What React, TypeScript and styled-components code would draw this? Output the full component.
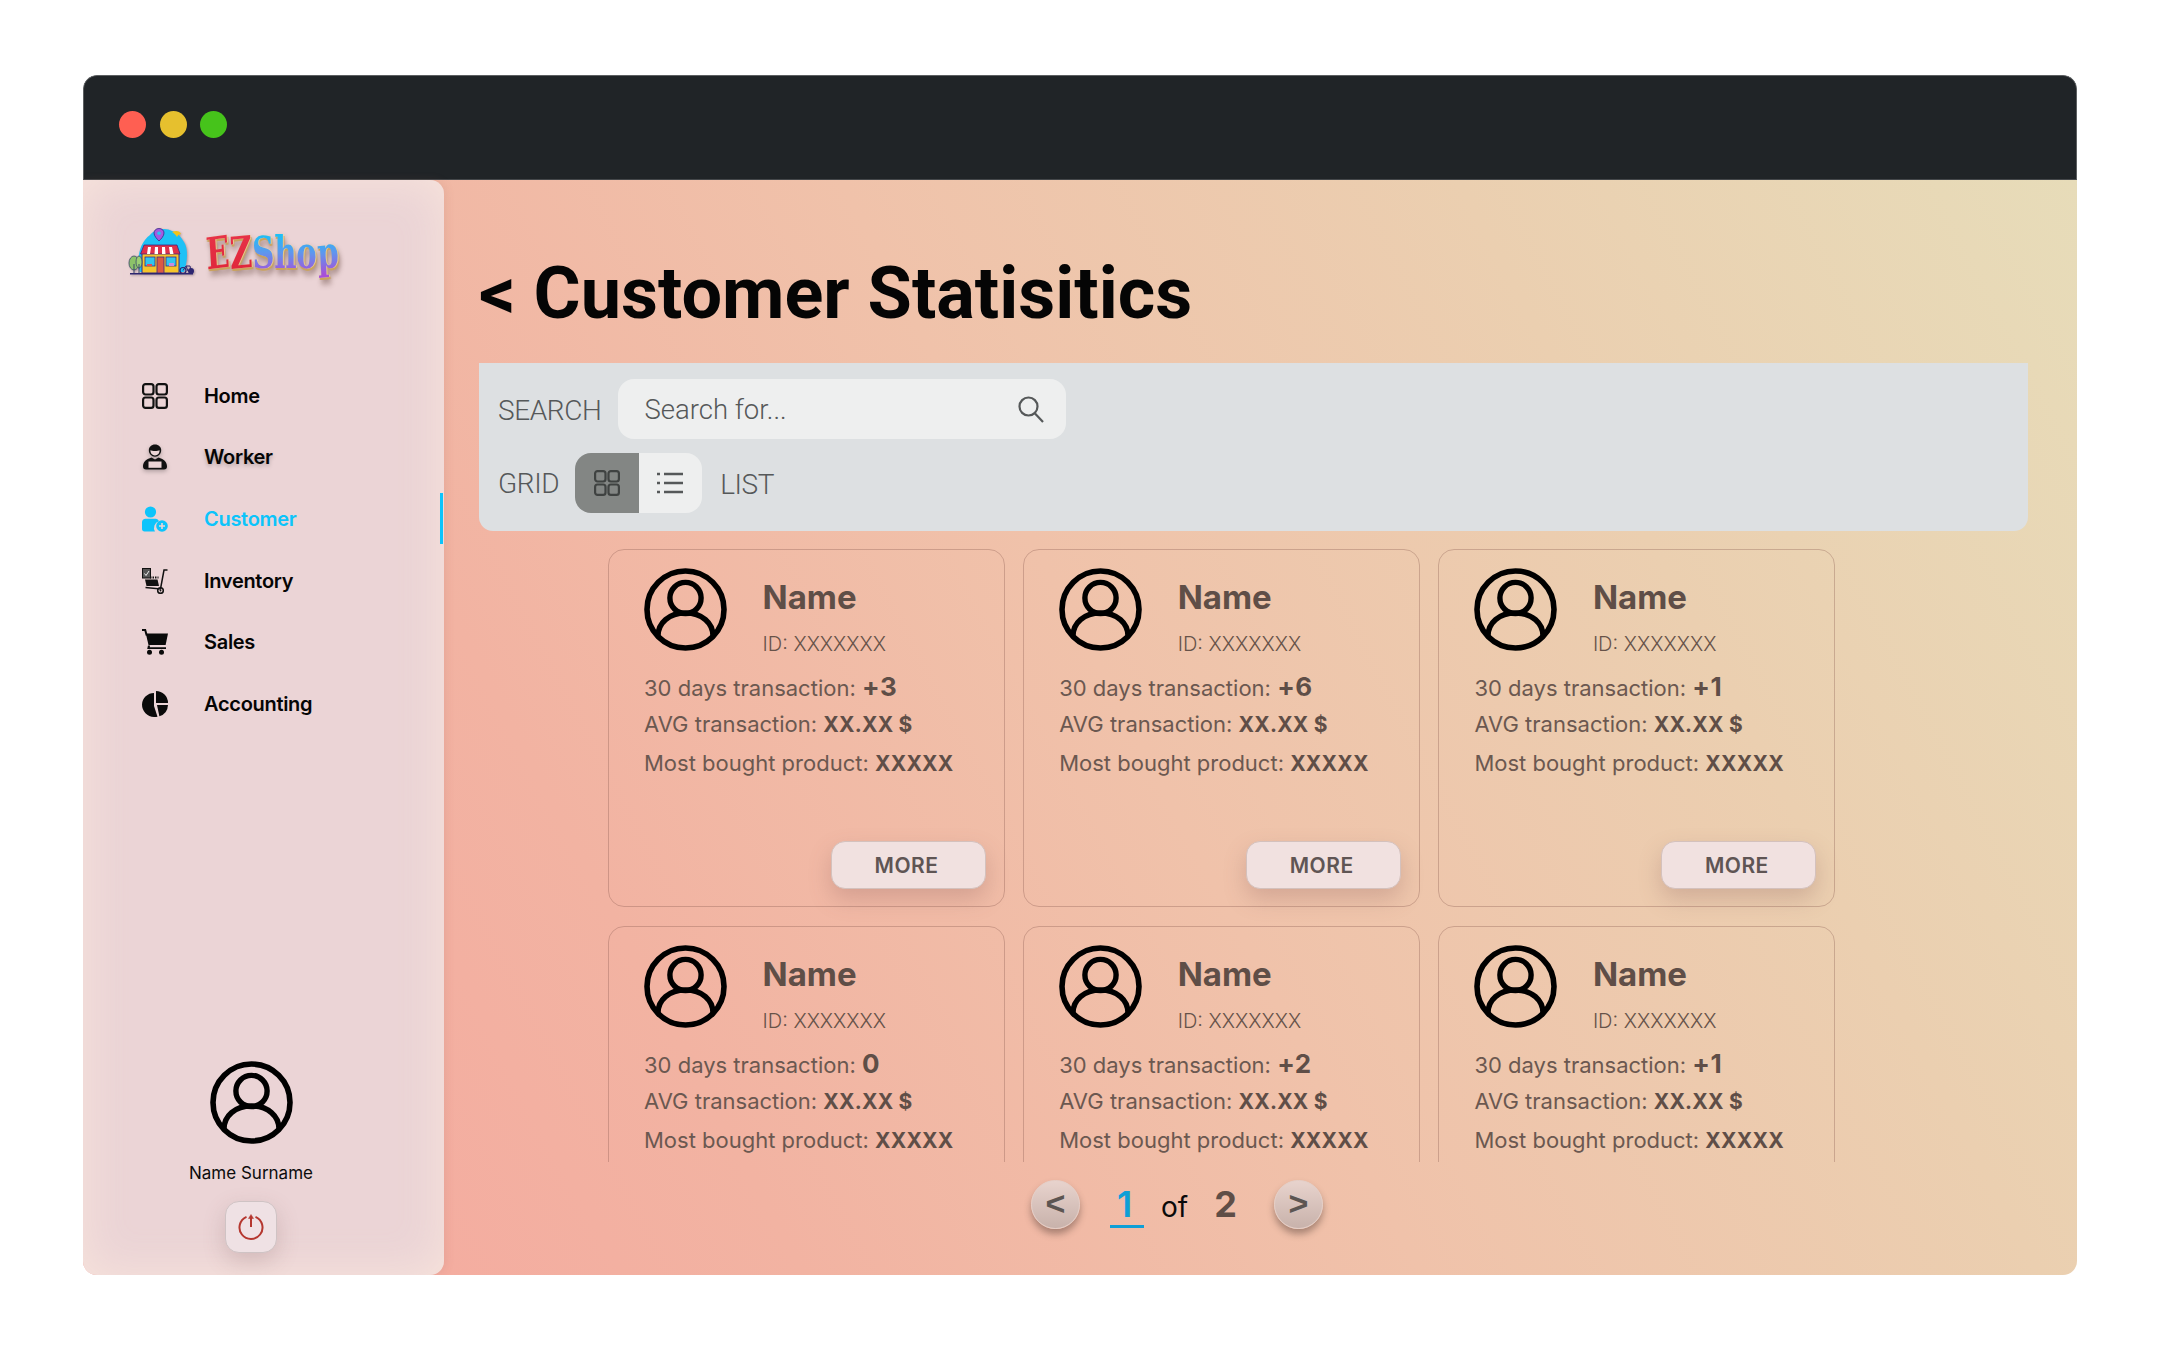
import styled, { createGlobalStyle } from "styled-components";

const GlobalStyle = createGlobalStyle`
    html, body {
        margin: 0;
        padding: 0;
        background: #fff;
        font-family: Inter, "Liberation Sans", sans-serif;
    }
    * { box-sizing: border-box; }
`

const Page = styled.div`
    width: 2161px;
    height: 1350px;
    padding: 75px 84px 75px 83px;
    overflow: hidden;
`

const AppWindow = styled.div`
    width: 100%;
    height: 100%;
    display: flex;
    flex-direction: column;
    border-radius: 14px;
    overflow: hidden;
`

const TitleBar = styled.div`
    height: 105px;
    flex: none;
    display: flex;
    align-items: center;
    gap: 13.5px;
    padding: 0 0 7px 35px;
    background: #202427;
    border: 1px solid #5c5f61;
    border-bottom-color: #44474a;
    border-radius: 14px 14px 0 0;
`

const Dot = styled.span<{ $color: string }>`
    width: 27px;
    height: 27px;
    border-radius: 50%;
    background: ${props => props.$color};
`

const Body = styled.div`
    flex: 1;
    min-height: 0;
    display: flex;
    background: linear-gradient(62deg, #f6a79e 0%, #f2b3a2 28%, #f0c2aa 52%, #ebcfb0 76%, #e7dcb9 100%);
`

const Sidebar = styled.aside`
    width: 361px;
    flex: none;
    display: flex;
    flex-direction: column;
    padding-top: 45px;
    background: #ebd4d6;
    border-radius: 0 14px 14px 0;
    box-shadow: inset 0 0 46px rgba(255, 236, 222, 0.65), 2px 0 10px rgba(150, 90, 80, 0.12);
`

const Logo = styled.div`
    height: 55px;
    display: flex;
    align-items: center;
    gap: 11px;
    padding-left: 45px;
`

const LogoWord = styled.div`
    display: flex;
    font-family: "DejaVu Serif", serif;
    font-weight: 700;
    font-size: 44px;
    line-height: 50px;
    transform: scaleX(0.7);
    transform-origin: left center;
    filter: drop-shadow(1px 0 0 #f0d9a4) drop-shadow(1px 2px 0 #c9a25e) drop-shadow(2px 4px 3px rgba(90, 60, 50, 0.45));
`

const LogoLetter = styled.span<{ $tilt: number; $fill: string }>`
    display: inline-block;
    transform: rotate(${props => props.$tilt}deg);
    background: ${props => props.$fill};
    -webkit-background-clip: text;
    background-clip: text;
    color: transparent;
`

const Nav = styled.nav`
    margin-top: 85px;
    display: flex;
    flex-direction: column;
`

const NavRow = styled.div<{ $active?: boolean; $shadow?: boolean }>`
    position: relative;
    height: 61.6px;
    display: flex;
    align-items: center;
    gap: 36px;
    padding-left: 59px;
    font-size: 20px;
    font-weight: 600;
    letter-spacing: -0.3px;
    color: ${props => props.$active ? "#0cc4fb" : "#050505"};
    text-shadow: ${props => props.$shadow ? "0 2px 4px rgba(0, 0, 0, 0.25)" : "none"};
`

const NavMarker = styled.span`
    position: absolute;
    right: 1.5px;
    top: 5px;
    width: 3px;
    height: 51px;
    background: #0cc4fb;
`

const NavIcon = styled.svg`
    width: 26px;
    height: 26px;
    flex: none;
    display: block;
`

const UserBlock = styled.div`
    margin-top: auto;
    width: 336px;
    padding-bottom: 22px;
    display: flex;
    flex-direction: column;
    align-items: center;
`

const UserName = styled.div`
    margin-top: 17px;
    font-size: 17px;
    line-height: 24px;
    color: #0c0c0c;
`

const PowerButton = styled.div`
    margin-top: 16px;
    width: 52px;
    height: 52px;
    display: flex;
    align-items: center;
    justify-content: center;
    background: #efe1e4;
    border: 1.5px solid #cfc3c4;
    border-radius: 14px;
    box-shadow: 0 8px 22px rgba(120, 80, 80, 0.22);
`

const Main = styled.main`
    flex: 1;
    min-width: 0;
    display: flex;
    flex-direction: column;
    padding: 0 49px 0 35px;
`

const Title = styled.h1`
    margin: 0;
    height: 183px;
    padding-top: 61px;
    font-family: Roboto, "Liberation Sans", sans-serif;
    font-size: 72px;
    line-height: 106px;
    font-weight: 700;
    letter-spacing: 0;
    color: #050505;
`

const Toolbar = styled.section`
    height: 168px;
    flex: none;
    display: flex;
    flex-direction: column;
    gap: 14px;
    padding: 16px 0 0 19px;
    background: #dde0e2;
    border-radius: 0 0 14px 14px;
    font-family: Roboto, "Liberation Sans", sans-serif;
    color: #555859;
`

const ToolRow = styled.div`
    height: 60px;
    display: flex;
    align-items: center;
`

const ToolLabel = styled.span<{ $gap: number; $drop: number }>`
    font-size: 28px;
    font-weight: 300;
    letter-spacing: -0.4px;
    margin-right: ${props => props.$gap}px;
    padding-top: ${props => props.$drop}px;
`

const SearchBox = styled.div`
    width: 448px;
    height: 60px;
    display: flex;
    align-items: center;
    justify-content: space-between;
    padding: 0 22px 0 26px;
    background: #eeefef;
    border-radius: 16px;
    font-size: 27.5px;
    font-weight: 300;
    letter-spacing: 0;
`

const Toggle = styled.div`
    width: 127px;
    height: 60px;
    display: flex;
    border-radius: 16px;
    overflow: hidden;
    margin-right: 18px;
`

const ToggleCell = styled.div<{ $on?: boolean }>`
    flex: 1;
    display: flex;
    align-items: center;
    justify-content: center;
    background: ${props => props.$on ? "#838684" : "#eeefef"};
`

const CardViewport = styled.div`
    margin-top: 18px;
    height: 613px;
    flex: none;
    overflow: hidden;
    padding-left: 129px;
`

const CardGrid = styled.div`
    display: grid;
    grid-template-columns: repeat(3, 397px);
    grid-auto-rows: 358px;
    column-gap: 18.2px;
    row-gap: 19px;
`

const Card = styled.article`
    position: relative;
    padding: 18px 0 0 35px;
    border: 1.5px solid rgba(130, 85, 75, 0.32);
    border-radius: 16px;
    color: #6b5850;
`

const CardHead = styled.div`
    display: flex;
    gap: 35.5px;
    height: 102px;
`

const NameColumn = styled.div`
    display: flex;
    flex-direction: column;
`

const CardName = styled.div`
    font-size: 33px;
    font-weight: 700;
    line-height: 40px;
    margin-top: 9px;
    color: #5f4e47;
`

const CardId = styled.div`
    font-size: 20px;
    font-weight: 300;
    line-height: 26px;
    margin-top: 14px;
    color: #665249;
`

const StatLine = styled.div<{ $top: number }>`
    margin-top: ${props => props.$top}px;
    font-size: 22px;
    line-height: 28px;
    font-weight: 400;
    letter-spacing: 0;
`

const StatValue = styled.b<{ $large?: boolean }>`
    font-weight: 700;
    font-size: ${props => props.$large ? "26px" : "21px"};
    letter-spacing: ${props => props.$large ? "0.5px" : "0.2px"};
    color: #5f4e47;
`

const MoreButton = styled.div`
    position: absolute;
    right: 18px;
    top: 291px;
    width: 155px;
    height: 48px;
    display: flex;
    align-items: center;
    justify-content: center;
    padding-right: 4px;
    background: #f1e1e0;
    border: 1.5px solid #d4c1bd;
    border-radius: 14px;
    box-shadow: 0 10px 22px rgba(130, 85, 85, 0.26);
    font-size: 21px;
    font-weight: 600;
    color: #5f5554;
    letter-spacing: 0.5px;
`

const Pagination = styled.div`
    flex: 1;
    display: flex;
    align-items: flex-start;
    padding: 18px 0 0 552px;
`

const PageArrow = styled.div<{ $gap: number }>`
    width: 49px;
    height: 49px;
    margin-right: ${props => props.$gap}px;
    display: flex;
    align-items: center;
    justify-content: center;
    border-radius: 50%;
    background: linear-gradient(180deg, #e8d3cd, #c8b2ab);
    border: 1px solid #e3d0ca;
    box-shadow: 0 5px 7px rgba(70, 50, 45, 0.42);
    font-family: "Liberation Sans", sans-serif;
    font-size: 34px;
    font-weight: 700;
    color: #5c5552;
    padding-bottom: 3px;
`

const PageCurrent = styled.div`
    width: 34px;
    height: 48px;
    display: flex;
    justify-content: center;
    padding: 1px 5px 0 0;
    border-bottom: 3px solid #0e9fd6;
    font-size: 36px;
    font-weight: 600;
    line-height: 46px;
    color: #0e9fd6;
`

const PageOf = styled.div`
    margin-left: 17px;
    font-size: 28px;
    line-height: 54px;
    color: #0a0a0a;
`

const PageTotal = styled.div`
    margin: 0 37px 0 26px;
    font-size: 36px;
    font-weight: 700;
    line-height: 46px;
    padding-top: 1px;
    color: #5f4e47;
`

function Avatar({ size = 83 }: { size?: number }) {
    return (
        <svg width={size} height={size} viewBox="0 0 83 83" fill="none" stroke="#000" style={{ flex: "none", display: "block" }}>
            <circle cx="41.5" cy="41.5" r="38.5" strokeWidth="5.6" />
            <circle cx="41.5" cy="30" r="15.6" strokeWidth="5.4" />
            <path d="M14 68 C14 55 25 45 41.5 45 C58 45 69 55 69 68" strokeWidth="5.4" />
        </svg>
    )
}

function GridGlyph({ color, size }: { color: string; size: number }) {
    return (
        <svg width={size} height={size} viewBox="0 0 26 26" fill="none" stroke={color} strokeWidth="2.2">
            <rect x="1.1" y="1.1" width="10.4" height="10.4" rx="2.4" />
            <rect x="14.5" y="1.1" width="10.4" height="10.4" rx="2.4" />
            <rect x="1.1" y="14.5" width="10.4" height="10.4" rx="2.4" />
            <rect x="14.5" y="14.5" width="10.4" height="10.4" rx="2.4" />
        </svg>
    )
}

const HomeIcon = () => <GridGlyph color="#111" size={26} />

const WorkerIcon = () => (
    <NavIcon viewBox="0 0 26 26" style={{ filter: "drop-shadow(0 2px 2px rgba(0,0,0,.25))" }}>
        <path d="M13 0.5c3.6 0 6.2 2.5 6.2 5.6 0 3.8-2.7 6.7-6.2 6.7S6.8 9.9 6.8 6.1C6.8 3 9.4.5 13 .5z" fill="#111" />
        <path d="M8.4 6.3c1.6.9 7.6.9 9.200 0 .1 3-1.900 5.200-4.600 5.200s-4.700-2.200-4.600-5.200z" fill="#ecd5d6" />
        <path d="M7 14.500 9.500 13.500 13 15.500 16.500 13.500 19 14.500C22.500 15.800 25 18.500 25 22.500 25 24.500 24 25.500 22 25.500H4C2 25.500 1 24.500 1 22.500 1 18.500 3.500 15.800 7 14.500z" fill="#111" />
        <path d="M6.500 17.500H19.500V23.800H6.500z" fill="#ecd5d6" />
    </NavIcon>
)

const CustomerIcon = () => (
    <NavIcon viewBox="0 0 26 26" fill="#0cc4fb">
        <circle cx="8.500" cy="6" r="5.600" />
        <path d="M3.500 12.800h10c1.800 0 3 1 3.400 2.400a7 7 0 0 0-3.900 10.300H2.500C1 25.500 0 24.500 0 23v-6.700c0-2 1.500-3.500 3.500-3.500z" />
        <circle cx="20" cy="20" r="5.800" />
        <path d="M20 17v6M17 20h6" stroke="#ecd5d6" strokeWidth="1.600" />
    </NavIcon>
)

const InventoryIcon = () => (
    <NavIcon viewBox="0 0 26 26">
        <rect x="0.500" y="0.500" width="8" height="9.500" fill="#555" stroke="#111" />
        <path d="M2.500 5.500 4 7.500 7 3" fill="none" stroke="#eee" strokeWidth="1" />
        <path d="M3 11.500H15.500L17 18H4.500z" fill="#111" />
        <path d="M8 9.500h8.500" stroke="#111" strokeWidth="1.800" strokeDasharray="1.500 1" />
        <path d="M25.500 2H22L18.500 21 3.500 19.500" fill="none" stroke="#111" strokeWidth="1.500" />
        <circle cx="18.500" cy="22.500" r="2.800" fill="none" stroke="#111" strokeWidth="1.500" />
        <circle cx="18.500" cy="22.500" r="0.900" fill="#111" />
    </NavIcon>
)

const SalesIcon = () => (
    <NavIcon viewBox="0 0 26 26">
        <path d="M0 1h3.200l1.500 5.500" fill="none" stroke="#0a0a0a" strokeWidth="2" />
        <path d="M3.800 4.600H26L23.600 16H6.500z" fill="#0a0a0a" />
        <path d="M6 16.500 5.200 20H24v-1.800H7.800L8 16.500z" fill="#0a0a0a" />
        <circle cx="7.500" cy="23.200" r="2.500" fill="#0a0a0a" />
        <circle cx="19.500" cy="23.200" r="2.500" fill="#0a0a0a" />
    </NavIcon>
)

const AccountingIcon = () => (
    <NavIcon viewBox="0 0 26 26" fill="#0a0a0a">
        <path d="M14 0a12 12 0 0 1 12 12H14z" />
        <path d="M12 2v13l3.500 10.800A13 13 0 0 1 12 26 12.500 12.500 0 0 1 0 13.500 12 12 0 0 1 12 2z" />
        <path d="M15 14h11a12.500 12.500 0 0 1-8.600 11.300z" />
    </NavIcon>
)

const StoreLogo = () => (
    <svg width="67" height="50" viewBox="0 0 67 50" style={{ flex: "none", filter: "drop-shadow(1px 1px 1px rgba(80,60,70,.4))" }}>
        <path d="M22 7C26 1 38-1 44 3 50 5 53 9 56 14 60 20 60 32 56 44H12C8 30 12 14 22 7z" fill="#1dc1f6" />
        <path d="M44 4c4-2 8-1 9 2-2 0-3 1-4 3-1-2-3-4-5-5z" fill="#f3c319" />
        <path d="M31 0.500c3 0 5 2 5 4.500 0 3-3 6-5 8-2-2-5-5-5-8 0-2.500 2-4.500 5-4.500z" fill="#a45be0" stroke="#3a2a86" strokeWidth="0.800" />
        <circle cx="31" cy="5.200" r="1.800" fill="#27c4f3" />
        <rect x="14" y="24" width="37" height="21" fill="#f5c52b" stroke="#3a2a86" strokeWidth="1" />
        <path d="M16 17H49L52 26H12.500z" fill="#df3049" stroke="#3a2a86" strokeWidth="0.800" />
        <path d="M20 19h3l-1 7h-3zM27 19h3v7h-3.500zM34 19h3l.5 7H34zM41 19h3l1.500 7H42z" fill="#fff" />
        <rect x="17" y="29" width="10" height="9" fill="#30c6ee" stroke="#3a2a86" strokeWidth="0.800" />
        <rect x="38" y="29" width="10" height="9" fill="#30c6ee" stroke="#3a2a86" strokeWidth="0.800" />
        <rect x="29" y="29" width="7" height="16" fill="#dc5a43" stroke="#3a2a86" strokeWidth="0.800" />
        <path d="M19 36h5v2h-5z" fill="#e34b5e" />
        <path d="M41 35h5v3h-5z" fill="#c98be0" />
        <ellipse cx="6" cy="35" rx="5" ry="7" fill="#8cc269" stroke="#3a4a6a" strokeWidth="0.800" />
        <ellipse cx="11" cy="34" rx="3" ry="6" fill="#9ccf74" stroke="#3a4a6a" strokeWidth="0.800" />
        <path d="M6 36v9M11 36v9" stroke="#3a4a6a" strokeWidth="1" />
        <circle cx="55" cy="42.500" r="3" fill="none" stroke="#2d2570" strokeWidth="1.200" />
        <circle cx="63" cy="43" r="3" fill="#2d2570" />
        <path d="M55 42.500 58 38H62L63 43M58 38l2 5" fill="none" stroke="#2d2570" strokeWidth="1" />
        <rect x="2" y="45" width="63" height="1.500" fill="#2d2570" />
    </svg>
)

const SearchIcon = () => (
    <svg width="26" height="27" viewBox="0 0 26 27" fill="none" stroke="#555859" strokeWidth="2.200">
        <circle cx="10.500" cy="10.500" r="9" />
        <path d="M17 17.500 25 26" />
    </svg>
)

const ListIcon = () => (
    <svg width="26" height="22" viewBox="0 0 26 22" stroke="#555859" strokeWidth="2.400">
        <path d="M0 2h3M0 11h3M0 20h3" />
        <path d="M7 2h19M7 11h19M7 20h19" />
    </svg>
)

const PowerIcon = () => (
    <svg width="26" height="26" viewBox="0 0 26 26" fill="none" stroke="#b5372f" strokeWidth="2">
        <path d="M8.500 2.900A11.500 11.500 0 1 0 17.500 2.900" />
        <path d="M13 13V3" />
        <path d="M10.500 4.500 13 .5 15.500 4.500z" fill="#b5372f" strokeWidth="0.500" />
    </svg>
)

const RED = "linear-gradient(180deg, #e8344a, #de2438)"
const BLUE = "linear-gradient(180deg, #12c6f8 8%, #5f96ee 50%, #a84fd8 92%)"

const logoLetters = [
    { char: "E", tilt: -5, fill: RED },
    { char: "Z", tilt: -4, fill: RED },
    { char: "S", tilt: -3, fill: BLUE },
    { char: "h", tilt: 0, fill: BLUE },
    { char: "o", tilt: 2, fill: BLUE },
    { char: "p", tilt: -4, fill: BLUE },
]

const navItems = [
    { label: "Home", icon: <HomeIcon /> },
    { label: "Worker", icon: <WorkerIcon />, shadow: true },
    { label: "Customer", icon: <CustomerIcon />, active: true },
    { label: "Inventory", icon: <InventoryIcon /> },
    { label: "Sales", icon: <SalesIcon /> },
    { label: "Accounting", icon: <AccountingIcon /> },
]

const customers = ["+3", "+6", "+1", "0", "+2", "+1"]

export default function App() {
    return (
        <Page>
            <GlobalStyle />
            <AppWindow>
                <TitleBar>
                    <Dot $color="#ff5f52" />
                    <Dot $color="#e6c02e" />
                    <Dot $color="#46c31b" />
                </TitleBar>
                <Body>
                    <Sidebar>
                        <Logo>
                            <StoreLogo />
                            <LogoWord>
                                {logoLetters.map(l => (
                                    <LogoLetter key={l.char} $tilt={l.tilt} $fill={l.fill}>{l.char}</LogoLetter>
                                ))}
                            </LogoWord>
                        </Logo>
                        <Nav>
                            {navItems.map(item => (
                                <NavRow key={item.label} $active={item.active} $shadow={item.shadow}>
                                    {item.icon}
                                    {item.label}
                                    {item.active && <NavMarker />}
                                </NavRow>
                            ))}
                        </Nav>
                        <UserBlock>
                            <Avatar />
                            <UserName>Name Surname</UserName>
                            <PowerButton><PowerIcon /></PowerButton>
                        </UserBlock>
                    </Sidebar>
                    <Main>
                        <Title>&lt; Customer Statisitics</Title>
                        <Toolbar>
                            <ToolRow>
                                <ToolLabel $gap={17} $drop={2}>SEARCH</ToolLabel>
                                <SearchBox>
                                    Search for...
                                    <SearchIcon />
                                </SearchBox>
                            </ToolRow>
                            <ToolRow>
                                <ToolLabel $gap={16} $drop={1}>GRID</ToolLabel>
                                <Toggle>
                                    <ToggleCell $on><GridGlyph color="#3f4241" size={26} /></ToggleCell>
                                    <ToggleCell><ListIcon /></ToggleCell>
                                </Toggle>
                                <ToolLabel $gap={0} $drop={3}>LIST</ToolLabel>
                            </ToolRow>
                        </Toolbar>
                        <CardViewport>
                            <CardGrid>
                                {customers.map((count, i) => (
                                    <Card key={i}>
                                        <CardHead>
                                            <Avatar />
                                            <NameColumn>
                                                <CardName>Name</CardName>
                                                <CardId>ID: XXXXXXX</CardId>
                                            </NameColumn>
                                        </CardHead>
                                        <StatLine $top={3}>30 days transaction: <StatValue $large>{count}</StatValue></StatLine>
                                        <StatLine $top={8}>AVG transaction: <StatValue>XX.XX $</StatValue></StatLine>
                                        <StatLine $top={10}>Most bought product: <StatValue>XXXXX</StatValue></StatLine>
                                        <MoreButton>MORE</MoreButton>
                                    </Card>
                                ))}
                            </CardGrid>
                        </CardViewport>
                        <Pagination>
                            <PageArrow $gap={30}>&lt;</PageArrow>
                            <PageCurrent>1</PageCurrent>
                            <PageOf>of</PageOf>
                            <PageTotal>2</PageTotal>
                            <PageArrow $gap={0}>&gt;</PageArrow>
                        </Pagination>
                    </Main>
                </Body>
            </AppWindow>
        </Page>
    )
}
